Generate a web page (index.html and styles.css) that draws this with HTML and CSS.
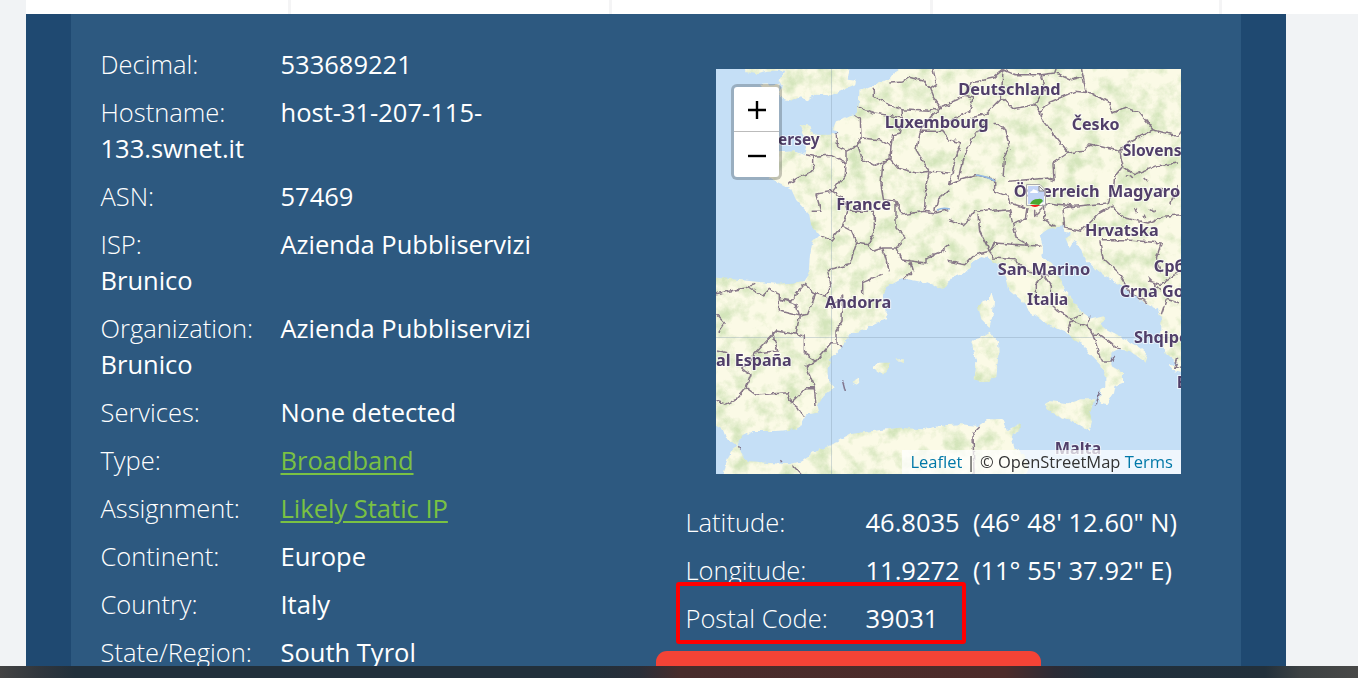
FILE: index.html
```html
<!DOCTYPE html>
<html lang="en">
<head>
<meta charset="utf-8">
<title>IP Details</title>
<link rel="stylesheet" href="styles.css">
</head>
<body>
<div class="page">
  <div class="tabs"><span class="tab t1"></span><span class="tab t2"></span><span class="tab t2"></span><span class="tab t3"></span><span class="tab last"></span></div>
  <main class="band">
    <div class="panel">
      <section class="details">
        <p><span class="key">Decimal:</span><span>533689221</span></p>
        <p><span class="key">Hostname:</span><span>host-31-207-115-133.swnet.it</span></p>
        <p><span class="key">ASN:</span><span>57469</span></p>
        <p><span class="key">ISP:</span><span>Azienda Pubbliservizi Brunico</span></p>
        <p><span class="key">Organization:</span><span>Azienda Pubbliservizi Brunico</span></p>
        <p><span class="key">Services:</span><span>None detected</span></p>
        <p><span class="key">Type:</span><a href="#">Broadband</a></p>
        <p><span class="key">Assignment:</span><a href="#">Likely Static IP</a></p>
        <p><span class="key">Continent:</span><span>Europe</span></p>
        <p><span class="key">Country:</span><span>Italy</span></p>
        <p><span class="key">State/Region:</span><span>South Tyrol</span></p>
      </section>
      <section class="location">
        <div class="map">
          <svg class="tiles" width="465" height="405" viewBox="0 0 465 405">
            <defs>
              <filter id="rough" x="0" y="0" width="465" height="405" filterUnits="userSpaceOnUse">
                <feTurbulence type="fractalNoise" baseFrequency=".16" numOctaves="2" seed="4" result="n"/>
                <feDisplacementMap in="SourceGraphic" in2="n" scale="5" xChannelSelector="R" yChannelSelector="G"/>
              </filter>
              <filter id="green" x="0" y="0" width="465" height="405" filterUnits="userSpaceOnUse" color-interpolation-filters="sRGB">
                <feTurbulence type="fractalNoise" baseFrequency=".06" numOctaves="5" seed="11"/>
                <feColorMatrix values="0 0 0 0 .78  0 0 0 0 .87  0 0 0 0 .68  0 2.6 0 0 -1.1"/>
              </filter>
            </defs>
            <rect class="land" width="465" height="405"/>
            <rect width="465" height="405" filter="url(#green)" opacity=".75"/>
            <g class="water" filter="url(#rough)">
              <g transform="translate(0 -1) scale(.33333)">
                <path d="M-20-20H80L88 12 120 18 150 8 205 8 188 40 200 60 187 75 200 92 230 98 255 85 275 98 300 80 345 82 385 65 418 50 420 38 395 35 404-20H560L525 30 490 45 430 70 428 115 420 140 360 160 350 185 370 195 345 200 300 200 285 190 280 172 250 172 262 200 270 235 265 262 235 250 200 252 150 255 120 262 100 290 110 320 150 325 180 340 225 362 240 395 280 440 285 470 310 500 290 520 282 560 277 625H-20Z"/>
                <path class="land" d="M130 50 190 48 190 75 150 80Z"/>
              </g>
              <g transform="translate(232 -1) scale(.33333)">
                <path d="M60 612 75 582 100 567 130 575 150 590 160 612ZM275 500 300 484 330 478 348 474 345 490 370 497 352 510 365 540 380 515 388 530 400 545 408 570 430 590 450 612H325L310 585 280 565 285 535Z"/>
              </g>
              <g transform="translate(0 202) scale(.33333)">
                <path d="M-20 18 50 25 100 30 180 38 230 35 268 30 284-6H-20Z"/>
                <path fill-rule="evenodd" d="M704 45 670 52 630 35 560 22 510 50 500 85 512 120 510 145 450 175 400 190 388 215 350 255 335 290 335 320 357 348 325 370 305 405 310 425 270 430 245 475 180 480 110 480 80 495 65 520 80 555 100 570 150 575 220 580 260 570 290 545 350 520 400 490 470 480 550 470 620 475 704 460ZM470 290 490 275 522 275 520 290 500 312ZM540 265 565 265 563 277ZM410 332 425 323 430 332 415 343Z"/>
                <path d="M-20 450 20 475 30 500 65 525 45 540 30 580 18 630H-20Z"/>
              </g>
              <g transform="translate(232 202) scale(.33333)">
                <path fill-rule="evenodd" d="M-6 45 10 20 40 10 60-10H160L175 20 185 60 220 90 245 120 290 155 350 180 375 205 410 225 425 250 455 280 475 315 475 345 460 355 455 395 475 400 495 370 500 345 525 335 525 305 490 285 490 245 510 235 545 240 580 265 590 275 597 250 575 230 530 205 480 180 455 160 475 145 470 135 430 145 400 125 380 90 350 60 340 30 318-10H440L470 15 530 50 580 90 630 115 640 150 640 200 650 245 690 280 660 280 680 300 720 310V630H235L240 580 225 550 200 530 190 500 215 475 215 460 180 480 165 445 120 445 90 465 40 460-6 462ZM130 62 138 90 135 130 125 168 100 145 90 105 105 90 125 85ZM70 210 90 205 125 182 150 215 152 240 145 318 110 337 80 325 85 275ZM290 400 305 390 360 397 400 385 440 385 425 425 432 450 425 480 370 450 310 425Z"/>
              </g>
            </g>
            <g class="grid"><path d="M115.5 0V405M0 268.5H465"/></g>
            <g class="borders" filter="url(#rough)">
              <g transform="translate(0 -1) scale(.33333)">
                <path d="M220 345 245 330 290 310 290 265 270 260M290 265 345 262 390 285 388 320 350 370 380 390 395 430 380 475 345 517 312 502M350 370 300 378 315 430 290 430M360 195 365 235 390 250 390 285M390 250 425 232 435 210 433 150 418 140M435 210 490 215 525 235 522 272 475 292 440 275 425 232M428 118 475 135 560 150 558 125 530 115 475 85 475 62M558 125 640 130 700 110M520 45 560 42 580 28 625 40 640 60 650 85 675 120 650 140 610 190 600 245 640 310 630 350 625 430 560 440 540 400 503 395 495 350 500 290 522 272 545 300 600 315 640 310 700 315M650 0 662 50 640 65M560 150 550 195 530 200 525 235M610 190 680 190 700 215M625 430 655 435 700 425M655 435 665 395 700 365M395 430 475 430 475 490 455 530 422 525 405 488 380 475M422 525 400 590 335 606M455 530 470 550 500 540 540 540 570 510 540 480 540 400M500 540 520 610M540 540 555 575 630 585 630 570 670 555 700 530M580 575 590 612"/>
              </g>
              <g transform="translate(232 -1) scale(.33333)">
                <path d="M0 105 50 85 75 90 65 130 0 160M50 85 70 45 135 30 165 5 160 90 195 122 260 110 275 130 300 105 380 70 430 75 485 105 495 135 530 118 575 135 615 185 690 205 700 190M160 90 110 140 65 150M140 165 170 185 185 235 170 265 165 330M110 165 75 210 45 270 30 335M0 215 40 225 20 280 5 350 40 335 90 322 140 335 140 370 180 385 185 405 235 420M180 340 300 330 318 338 315 285 360 255 285 160 275 130M260 110 290 65 280 20 320 15 325 0M400 0 415 75M280 20 200 20 165 5M325 15 370 35 410 25M360 255 410 250 425 228 515 250 525 295 500 325 495 370 480 405 380 415 300 405 260 445 260 425M525 295 560 320 620 295 690 285M615 185 540 225 515 250M290 405 290 455 320 475M380 415 345 420 350 480 400 490 455 435 490 415 530 450 600 465 650 445 700 440M0 455 50 470 80 430 125 425 135 430 185 425 195 470 235 450 240 420M0 580 50 590 80 560 125 550 140 525 280 535M125 550 95 490 90 440M195 470 205 510 240 530M125 550 140 570 200 575 240 612M455 520 465 570 510 612M460 515 530 515 640 525 625 570 640 612M535 322 555 332M590 330 600 340M585 440 590 450M560 420 565 433M605 425 620 432M640 360 650 375M665 410 690 350"/>
              </g>
              <g transform="translate(0 202) scale(.33333)">
                <path d="M0 68 85 52 115 40M100 48 140 75 160 55 190 70 195 85 225 90 265 40 300 68 275 130 250 135 240 190 180 180 120 245M190 70 190 120 250 135 240 100 195 85M300 68 330 75 345 40 335 0M330 75 350 110 380 75 378 150 360 180 360 215 375 230M440 75 440 35 500 10M565 25 585 5M240 190 265 195 265 245 300 270 345 215 360 215M300 270 270 285 295 350 300 405M170 185 185 240 120 245 80 295 105 310 90 350 120 372 215 365 225 395 270 350 295 350M225 395 245 410 262 437M90 350 60 385 30 400 0 390M0 130 25 155 5 185M0 240 40 250M230 583 257 612M380 328 388 360M67 526 75 535M193 568 198 573"/>
              </g>
              <g transform="translate(232 202) scale(.33333)">
                <path d="M265 75 265 35 285 10 310 45 310 100 325 115 370 145 405 130M360 180 370 150 420 165 425 135M420 165 435 190 455 190 515 235M435 190 460 270 490 270 500 255M445 400 455 360M75 485 95 465M75 485 78 612M640 130 655 85 690 95M640 60 600 20M510 5 550 70 600 95M690 260 680 290 699 285M240 0 300 12M600 30 640 40 700 0"/>
              </g>
            </g>
            <path class="lake" d="M260 106Q270 107 279 112M221 141Q227 138 234 140"/>
            <g class="labels">
              <g transform="translate(0 -1) scale(.33333)">
                <text x="171" y="231" textLength="140" lengthAdjust="spacingAndGlyphs">Jersey</text>
                <text x="506" y="181" textLength="312" lengthAdjust="spacingAndGlyphs">Luxembourg</text>
                <text x="361" y="426" textLength="164" lengthAdjust="spacingAndGlyphs">France</text>
              </g>
              <g transform="translate(232 -1) scale(.33333)">
                <text x="31" y="80" textLength="307" lengthAdjust="spacingAndGlyphs">Deutschland</text>
                <text x="371" y="185" textLength="144" lengthAdjust="spacingAndGlyphs">Česko</text>
                <text x="524" y="264" textLength="235" lengthAdjust="spacingAndGlyphs">Slovensko</text>
                <text x="197" y="387" textLength="258" lengthAdjust="spacingAndGlyphs">Österreich</text>
                <text x="479" y="387" textLength="350" lengthAdjust="spacingAndGlyphs">Magyarország</text>
                <text x="411" y="504" textLength="221" lengthAdjust="spacingAndGlyphs">Hrvatska</text>
                <text x="149" y="620" textLength="278" lengthAdjust="spacingAndGlyphs">San Marino</text>
                <text x="617" y="611">Србија</text>
              </g>
              <g transform="translate(0 202) scale(.33333)">
                <text x="327" y="111" textLength="199" lengthAdjust="spacingAndGlyphs">Andorra</text>
                <text x="44" y="284" text-anchor="end">Portugal</text>
                <text x="56" y="284" textLength="171" lengthAdjust="spacingAndGlyphs">España</text>
              </g>
              <g transform="translate(232 202) scale(.33333)">
                <text x="237" y="103" textLength="124" lengthAdjust="spacingAndGlyphs">Italia</text>
                <text x="515" y="77" textLength="243" lengthAdjust="spacingAndGlyphs">Crna Gora</text>
                <text x="558" y="217" textLength="230" lengthAdjust="spacingAndGlyphs">Shqipëria</text>
                <text x="686" y="351">Ελλάδα</text>
                <text x="320" y="549" textLength="140" lengthAdjust="spacingAndGlyphs">Malta</text>
              </g>
            </g>
          </svg>
          <svg class="pin" width="20" height="24" viewBox="0 0 20 24">
            <path d="M.5 .5H14L19.500 6V21.500H.5Z" fill="#fff" fill-opacity=".55" stroke="#aaa"/>
            <path d="M2 2H13V7H18V18L13 20H2Z" fill="#c3d4f7"/>
            <path d="M4 9Q4 7 6 7Q7 4 9 6Q12 6 12 9Z" fill="#fff"/>
            <path d="M4 20Q6 15 12 15Q16 14 17 17L13 21Z" fill="#4ca82f"/>
            <path d="M13 2V7H18Z" fill="#eee" stroke="#888"/>
            <path d="M4 21H14Q9 25 4 21Z" fill="#f31616"/>
          </svg>
          <div class="zoom">
            <button class="in" aria-label="Zoom in"><svg width="18" height="18"><path d="M0 9H18M9 0V18"/></svg></button>
            <button class="out" aria-label="Zoom out"><svg width="18" height="18"><path d="M0 9H18"/></svg></button>
          </div>
          <div class="credit"><a href="#">Leaflet</a> | © OpenStreetMap <a href="#">Terms</a></div>
        </div>
        <div class="coords">
          <p><span class="key">Latitude:</span><span>46.8035&nbsp; (46° 48' 12.60" N)</span></p>
          <p><span class="key">Longitude:</span><span>11.9272&nbsp; (11° 55' 37.92" E)</span></p>
          <p><span class="key">Postal Code:</span><span>39031</span></p>
          <div class="highlight"></div>
        </div>
        <div class="action"></div>
      </section>
    </div>
  </main>
  <footer class="taskbar"></footer>
</div>
</body>
</html>
```
FILE: styles.css
```css
* { box-sizing: border-box; }
body { margin: 0; background: #f1f3f5; font-family: "Open Sans", "Noto Sans", sans-serif; }
.page { width: 1358px; height: 678px; display: flex; flex-direction: column; overflow: hidden; }
.tabs { height: 14px; flex: none; margin-left: 26px; background: #fff; display: flex; }
.tab { border-right: 3px solid #f4f4f5; }
.t1 { width: 265px; }
.t2 { width: 321px; }
.t3 { width: 289px; }
.last { flex: 1; border: 0; }
.band { height: 652px; flex: none; width: 1260px; margin-left: 26px; padding: 0 45px; background: #1f4971; overflow: hidden; }
.panel { height: 652px; background: #2d5980; display: flex; color: #fff; font-size: 25.5px; line-height: 36px; overflow: hidden; }
.details { width: 585px; padding: 32px 45px 0 29.5px; }
p { margin: 0 0 12px; }
.key { display: inline-block; width: 180px; font-weight: 300; }
.details a { color: #7ac143; text-decoration-thickness: 2px; text-underline-offset: 3px; }
.location { width: 585px; padding-top: 55px; }
.map { position: relative; width: 465px; height: 405px; margin-left: 60px; overflow: hidden; }
.tiles { display: block; }
.land { fill: #fbfae6; }
.water path:not(.land) { fill: #c5dff6; }
.grid { fill: none; stroke: #8298ad; stroke-opacity: .35; stroke-width: 1; }
.borders { fill: none; stroke: #75637a; stroke-width: 4.5; stroke-linejoin: round; opacity: .85; }
.lake { fill: none; stroke: #93b9e5; stroke-width: 1.5; }
.labels { font: 700 49px "Noto Sans", sans-serif; fill: #513f69; stroke: #fff; stroke-opacity: .65; stroke-width: 6px; paint-order: stroke; }
.pin { position: absolute; left: 310px; top: 115px; }
.zoom { position: absolute; left: 15px; top: 15px; width: 51px; height: 96px; border: 3px solid rgba(0,0,0,.22); border-radius: 6px; background: #fff; background-clip: padding-box; }
.zoom button { display: flex; width: 45px; height: 45px; padding: 2px 0 0; border: 0; background: none; align-items: center; justify-content: center; }
.zoom .in { border-bottom: 1px solid #bbb; }
.zoom path { stroke: #000; stroke-width: 2.4; fill: none; }
.credit { position: absolute; right: 0; bottom: 0; height: 24px; padding: 0 8px; background: rgba(255,255,255,.72); color: #333; font-size: 16.5px; line-height: 24px; white-space: nowrap; }
.credit a { color: #0078a8; text-decoration: none; }
.coords { position: relative; margin: 30px 0 0 29.5px; height: 147px; white-space: nowrap; }
.highlight { position: absolute; left: -9.500px; top: 78px; width: 290px; height: 62px; border: 4px solid #f00; border-radius: 3px; }
.action { width: 385px; height: 60px; background: #f44336; border-radius: 11px; }
.taskbar { height: 12px; flex: none; background: linear-gradient(90deg, #434343 0, #30363d 40px, #22303b 75px, #22303b 590px, #2a2e38 640px, #482c2b 680px, #4d2b2a 1005px, #2c2b35 1055px, #202f3b 1100px, #22303b 1265px, #3c4143 1300px, #484847 1358px); }
```
